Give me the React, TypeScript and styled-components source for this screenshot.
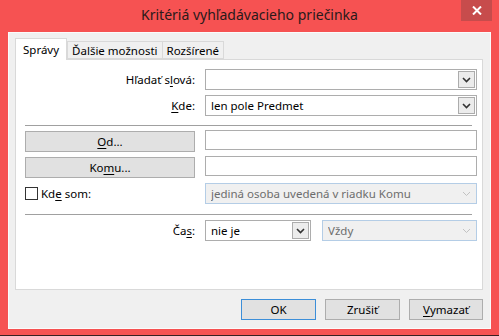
import React from "react";
import styled, { createGlobalStyle } from "styled-components";

const GlobalStyle = createGlobalStyle`
	html, body {
		margin: 0;
		padding: 0;
		background: #ffffff;
	}
	body {
		font-family: "Noto Sans", "Open Sans", sans-serif;
		font-size: 11.5px;
		color: #000;
	}
`;

const Window = styled.div`
	width: 499px;
	height: 336px;
	box-sizing: border-box;
	background: #f65252;
	border-bottom: 1px solid #3a2020;
	display: flex;
	flex-direction: column;
`;

const TitleBar = styled.div`
	height: 32px;
	display: flex;
	position: relative;
	align-items: flex-start;
	justify-content: center;
`;

const Title = styled.div`
	font-size: 14px;
	color: #2a1a1a;
	margin-top: 5px;
`;

const CloseButton = styled.div`
	position: absolute;
	top: 0;
	right: 7px;
	width: 31px;
	height: 21px;
	background: #c74c4c;
	display: flex;
	align-items: center;
	justify-content: center;
`;

const Client = styled.div`
	flex: 1;
	margin: 0 8px 6px 8px;
	background: #f0f0f0;
	border: 1px solid #fbfbfb;
	box-sizing: border-box;
	padding: 5px 7px 8px 6px;
	display: flex;
	flex-direction: column;
`;

const TabStrip = styled.div`
	display: flex;
	align-items: flex-end;
	height: 21px;
	position: relative;
	z-index: 1;
`;

const Tab = styled.div<{ $active?: boolean }>`
	height: ${(p) => (p.$active ? "22px" : "18px")};
	box-sizing: border-box;
	padding: 0 ${(p) => (p.$active ? "7px" : "4px")};
	display: flex;
	align-items: center;
	background: ${(p) => (p.$active ? "#ffffff" : "#f0f0f0")};
	border: 1px solid #d9d9d9;
	border-bottom: ${(p) => (p.$active ? "none" : "1px solid #d9d9d9")};
	margin-right: ${(p) => (p.$active ? "0" : "-1px")};
	margin-bottom: ${(p) => (p.$active ? "-1px" : "0")};
	white-space: nowrap;
`;

const Panel = styled.div`
	height: 231px;
	box-sizing: border-box;
	background: #ffffff;
	border: 1px solid #d9d9d9;
	padding: 9px 5px 0 9px;
	display: grid;
	grid-template-columns: 170px 272px;
	column-gap: 10px;
	row-gap: 5px;
	align-content: start;
`;

const Label = styled.div`
	height: 21px;
	display: flex;
	align-items: center;
	justify-content: flex-end;
	white-space: nowrap;
`;

const Key = styled.span`
	text-decoration: underline;
	text-underline-offset: 2px;
`;

const Separator = styled.div<{ $top: number }>`
	grid-column: 1 / -1;
	height: 1px;
	background: #a0a0a0;
	margin: ${(p) => p.$top}px 5px 0 0;
`;

const Combo = styled.div<{ $disabled?: boolean; $width?: number }>`
	height: 21px;
	width: ${(p) => (p.$width ? `${p.$width}px` : "100%")};
	box-sizing: border-box;
	border: 1px solid ${(p) => (p.$disabled ? "#b4cde6" : "#adadad")};
	background: ${(p) => (p.$disabled ? "#f0f0f0" : "#ffffff")};
	color: ${(p) => (p.$disabled ? "#6d6d6d" : "#000")};
	display: flex;
	align-items: center;
	padding: 0 1px 0 5px;
	white-space: nowrap;
	overflow: hidden;
`;

const ComboText = styled.div`
	flex: 1;
	overflow: hidden;
`;

const ArrowBox = styled.div<{ $disabled?: boolean }>`
	width: 17px;
	height: 17px;
	box-sizing: border-box;
	border: 1px solid ${(p) => (p.$disabled ? "transparent" : "#acacac")};
	background: ${(p) => (p.$disabled ? "transparent" : "#ececec")};
	display: flex;
	align-items: center;
	justify-content: center;
`;

const TextInput = styled.div`
	height: 20px;
	box-sizing: border-box;
	border: 1px solid #adadad;
	background: #fff;
	margin-top: -1px;
`;

const Button = styled.div<{ $default?: boolean; $width?: number }>`
	height: 21px;
	width: ${(p) => (p.$width ? `${p.$width}px` : "auto")};
	box-sizing: border-box;
	background: #e1e1e1;
	border: 1px solid ${(p) => (p.$default ? "#3c8ed8" : "#adadad")};
	display: flex;
	align-items: center;
	justify-content: center;
	white-space: nowrap;
`;

const CheckRow = styled.div`
	height: 21px;
	display: flex;
	align-items: center;
	gap: 3px;
`;

const CheckBox = styled.div`
	width: 13px;
	height: 13px;
	box-sizing: border-box;
	border: 1px solid #333;
	background: #fff;
`;

const TimeRow = styled.div`
	display: flex;
	gap: 11px;
`;

const Footer = styled.div`
	display: flex;
	justify-content: flex-end;
	gap: 9px;
	margin-top: 9px;
`;

function Chevron({ disabled }: { disabled?: boolean }) {
	return (
		<svg width="9" height="6" viewBox="0 0 9 6">
			<polyline
				points="1,1 4.5,4.5 8,1"
				fill="none"
				stroke={disabled ? "#c2c2c2" : "#333"}
				strokeWidth={disabled ? 1 : 1.6}
			/>
		</svg>
	);
}

function DropDown({
	text,
	disabled,
	width,
}: {
	text?: string;
	disabled?: boolean;
	width?: number;
}) {
	return (
		<Combo $disabled={disabled} $width={width}>
			<ComboText>{text}</ComboText>
			<ArrowBox $disabled={disabled}>
				<Chevron disabled={disabled} />
			</ArrowBox>
		</Combo>
	);
}

export default function App() {
	return (
		<>
			<GlobalStyle />
			<Window>
				<TitleBar>
					<Title>Kritériá vyhľadávacieho priečinka</Title>
					<CloseButton>
						<svg width="10" height="9" viewBox="0 0 10 9">
							<path d="M1 0.5 L9 8.5 M9 0.5 L1 8.5" stroke="#fff" strokeWidth="2" />
						</svg>
					</CloseButton>
				</TitleBar>
				<Client>
					<TabStrip>
						<Tab $active>Správy</Tab>
						<Tab>Ďalšie možnosti</Tab>
						<Tab>Rozšírené</Tab>
					</TabStrip>
					<Panel>
						<Label>
							Hľadať s<Key>l</Key>ová:
						</Label>
						<DropDown />

						<Label>
							<Key>K</Key>de:
						</Label>
						<DropDown text="len pole Predmet" />

						<Separator $top={4} />

						<Button>
							<Key>O</Key>d...
						</Button>
						<TextInput />

						<Button>
							Ko<Key>m</Key>u...
						</Button>
						<TextInput />

						<CheckRow>
							<CheckBox />
							<span>
								Kd<Key>e</Key> som:
							</span>
						</CheckRow>
						<DropDown text="jediná osoba uvedená v riadku Komu" disabled />

						<Separator $top={5} />

						<Label>
							Ča<Key>s</Key>:
						</Label>
						<TimeRow>
							<DropDown text="nie je" width={106} />
							<DropDown text="Vždy" disabled width={155} />
						</TimeRow>
					</Panel>
					<Footer>
						<Button $default $width={75}>
							OK
						</Button>
						<Button $width={75}>Zrušiť</Button>
						<Button $width={74}>
							<Key>V</Key>ymazať
						</Button>
					</Footer>
				</Client>
			</Window>
		</>
	);
}
